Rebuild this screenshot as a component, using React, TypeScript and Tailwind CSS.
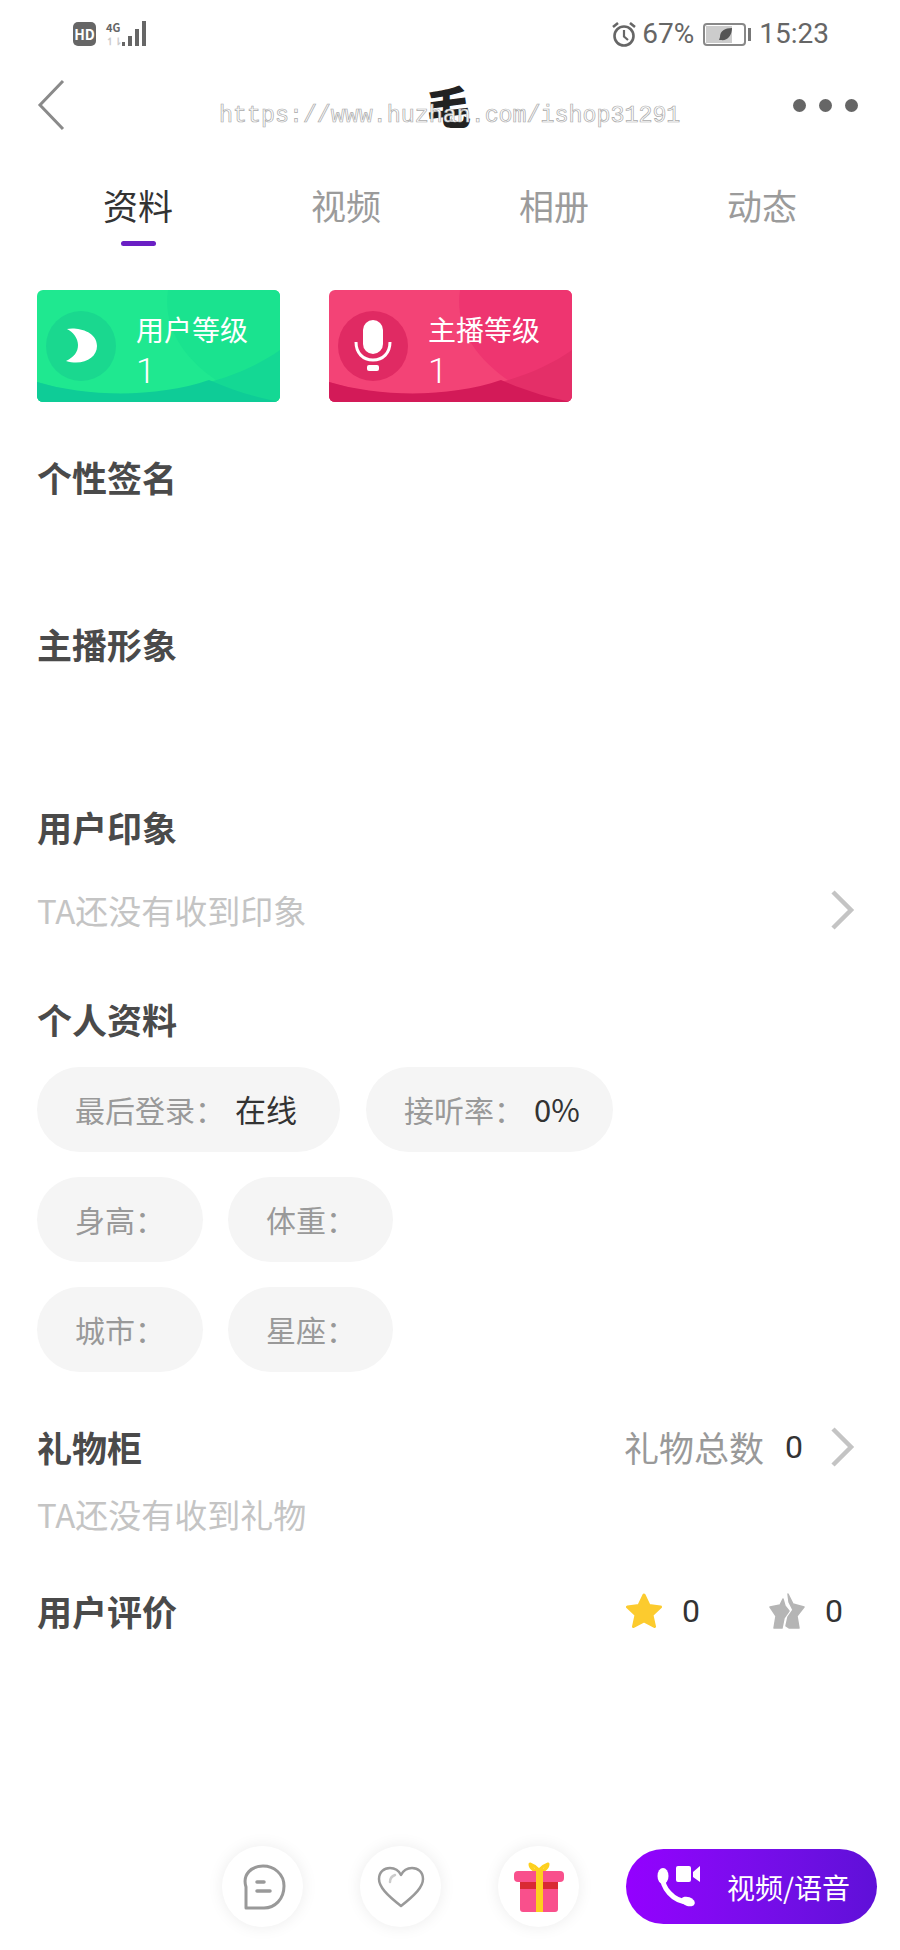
import React from "react";

const tabs = ["资料", "视频", "相册", "动态"];

function Heading({ children, className = "" }: { children: React.ReactNode; className?: string }) {
  return <h2 className={`text-[35px] leading-[48px] font-bold text-[#4a4a4a] -mt-px ${className}`}>{children}</h2>;
}

function Chevron() {
  return (
    <svg width="26" height="42" viewBox="0 0 26 42" fill="none" className="shrink-0">
      <path d="M4 3l18 18L4 39" stroke="#c4c4c4" strokeWidth="4.5" />
    </svg>
  );
}

function Pill({ label, value, className = "" }: { label: string; value?: string; className?: string }) {
  return (
    <div className={`h-[85px] rounded-full bg-[#f5f5f5] flex items-center pl-[38px] text-[30px] text-[#999] ${className}`}>
      {label}
      {value && <span className="text-[#333] text-[31px] ml-[10px]">{value}</span>}
    </div>
  );
}

function StatusBar() {
  return (
    <div className="h-[66px] flex items-center pl-[73px] pr-[71px] pt-[2px] text-[#666]">
      <div className="w-[23px] h-[24px] rounded-[5px] bg-[#666] text-white text-[14px] leading-[24px] text-center font-bold">HD</div>
      <div className="ml-[10px] w-[14px] h-[26px] flex flex-col">
        <span className="text-[11px] leading-[13px] font-bold">4G</span>
        <span className="text-[10px] leading-[13px] text-[#ccc] font-bold">↿⇂</span>
      </div>
      <svg width="26" height="26" viewBox="0 0 26 26" className="ml-px" fill="#666">
        <rect x="1" y="21" width="3" height="4" />
        <rect x="7" y="15" width="4" height="10" />
        <rect x="14" y="8" width="4" height="17" />
        <rect x="21" y="0" width="4" height="25" />
      </svg>
      <svg width="26" height="26" viewBox="0 0 26 26" fill="none" stroke="#666" className="ml-auto">
        <circle cx="13" cy="15" r="9.5" strokeWidth="2.6" />
        <path d="M13 9v6.5l4 3.5" strokeWidth="2.2" />
        <path d="M2 6l5-4M24 6l-5-4" strokeWidth="2.6" />
      </svg>
      <span className="ml-[5px] text-[28px] leading-none font-[Roboto,sans-serif]">67%</span>
      <div className="ml-[9px] w-[43px] h-[23px] rounded-[4px] border-2 border-[#888] p-px relative">
        <div className="w-[26px] h-full bg-[#ccc]" />
        <svg width="14" height="13" viewBox="0 0 14 13" className="absolute left-[14px] top-[3px]" fill="#555">
          <path d="M13 0C6 0 1 3 1 9l-1 3 2 0c6 1 11-4 11-12z" />
        </svg>
      </div>
      <div className="ml-[2px] w-[3px] h-[13px] bg-[#777]" />
      <span className="ml-[8px] text-[28px] leading-none font-[Roboto,sans-serif]">15:23</span>
    </div>
  );
}

function LevelCard({ kind, label }: { kind: "user" | "host"; label: string }) {
  const green = kind === "user";
  return (
    <div className={`relative w-[243px] h-[112px] rounded-[6px] overflow-hidden flex items-center pl-[9px] text-white ${green ? "bg-[#1fe890]" : "bg-[#f34376]"}`}>
      <svg viewBox="0 0 243 112" className="absolute inset-0 w-full h-full">
        <path d="M131 0C125 40 150 75 195 100L243 112V0z" fill={green ? "#1ae38f" : "#ee3570"} />
        <path d="M0 92C70 115 180 105 243 60V112H0z" fill={green ? "#14d894" : "#e42f68"} />
        <path d="M0 92C50 107 120 108 172 90C195 100 220 108 243 112H0z" fill={green ? "#0ecc97" : "#d31a58"} />
      </svg>
      <div className={`relative w-[70px] h-[70px] rounded-full flex items-center justify-center ${green ? "bg-[#1ad88f]" : "bg-[#e02a63]"}`}>
        {green ? (
          <svg width="32" height="36" viewBox="0 0 32 36" fill="#fff">
            <path d="M2 1C10-1 32 2 32 18 32 30 18 38 1 33 9 29 13 24 13 17 13 10 8 4 2 1z" />
          </svg>
        ) : (
          <svg width="38" height="52" viewBox="0 0 38 52" fill="none">
            <rect x="9" y="0" width="20" height="34" rx="10" fill="#fff" />
            <path d="M2 22c0 11 7 18 17 18s17-7 17-18" stroke="#fff" strokeWidth="3" />
            <rect x="13" y="45" width="12" height="6" rx="2" fill="#fff" />
          </svg>
        )}
      </div>
      <div className="relative ml-[20px] mt-[9px]">
        <div className="text-[28px] leading-[40px]">{label}</div>
        <div className="text-[35px] leading-[40px] font-[Roboto,sans-serif] font-light mt-[3px]">1</div>
      </div>
    </div>
  );
}

function RoundBtn({ children }: { children: React.ReactNode }) {
  return (
    <div className="w-[81px] h-[81px] rounded-full bg-white shadow-[0_0_16px_rgba(0,0,0,0.08)] flex items-center justify-center">
      {children}
    </div>
  );
}

export default function App() {
  return (
    <div className="relative w-[900px] h-[1950px] bg-white flex flex-col overflow-hidden font-['Noto_Sans_CJK_SC','Noto_Sans',sans-serif]">
      <StatusBar />

      {/* 导航 */}
      <div className="h-[78px] flex items-center justify-between pl-[37px] pr-[42px]">
        <svg width="28" height="52" viewBox="0 0 28 52" fill="none">
          <path d="M26 2L3 26l23 24" stroke="#8a8a8a" strokeWidth="3" />
        </svg>
        <span className="text-[44px] leading-none font-black text-[#222] ml-[40px] font-['Noto_Sans_CJK_SC']">毛</span>
        <div className="flex gap-[13px]">
          <div className="w-[13px] h-[13px] rounded-full bg-[#666]" />
          <div className="w-[13px] h-[13px] rounded-full bg-[#666]" />
          <div className="w-[13px] h-[13px] rounded-full bg-[#666]" />
        </div>
      </div>
      <div className="absolute left-[219px] top-[100px] text-[23.3px] leading-[32px] font-['Liberation_Mono',monospace] text-white [-webkit-text-stroke:0.7px_#aaaaaa] whitespace-nowrap">
        https://www.huzhan.com/ishop31291
      </div>

      {/* 标签 */}
      <div className="grid grid-cols-4 px-[34px] mt-[37px]">
        {tabs.map((t, i) => (
          <div key={t} className="flex flex-col items-center">
            <span className={`text-[35px] leading-[48px] ${i === 0 ? "text-[#333]" : "text-[#9b9b9b]"}`}>{t}</span>
            <div className={`mt-[12px] w-[35px] h-[5px] rounded-full ${i === 0 ? "bg-[#6a1fc4]" : ""}`} />
          </div>
        ))}
      </div>

      <div className="pl-[37px] pr-[45px]">
        <div className="flex gap-[49px] mt-[44px]">
          <LevelCard kind="user" label="用户等级" />
          <LevelCard kind="host" label="主播等级" />
        </div>

        <Heading className="mt-[51px]">个性签名</Heading>
        <Heading className="mt-[119px]">主播形象</Heading>
        <Heading className="mt-[135px]">用户印象</Heading>

        <div className="mt-[35px] h-[48px] flex items-center justify-between">
          <span className="text-[33px] leading-[48px] text-[#c4c4c4]">TA还没有收到印象</span>
          <Chevron />
        </div>

        <Heading className="mt-[61px]">个人资料</Heading>

        <div className="mt-[24px] flex flex-col gap-[25px]">
          <div className="flex gap-[26px]">
            <Pill label="最后登录：" value="在线" className="w-[303px]" />
            <Pill label="接听率：" value="0%" className="w-[247px]" />
          </div>
          <div className="flex gap-[25px]">
            <Pill label="身高：" className="w-[166px]" />
            <Pill label="体重：" className="w-[165px]" />
          </div>
          <div className="flex gap-[25px]">
            <Pill label="城市：" className="w-[166px]" />
            <Pill label="星座：" className="w-[165px]" />
          </div>
        </div>

        <div className="mt-[51px] h-[48px] flex items-center">
          <Heading>礼物柜</Heading>
          <span className="ml-auto text-[35px] leading-[48px] text-[#999]">礼物总数</span>
          <span className="ml-[21px] text-[32px] leading-[48px] text-[#333] font-[Roboto,sans-serif]">0</span>
          <span className="ml-[26px]"><Chevron /></span>
        </div>

        <div className="mt-[19px] text-[33px] leading-[48px] text-[#c4c4c4]">TA还没有收到礼物</div>

        <div className="mt-[49px] h-[48px] flex items-center pr-[12px]">
          <Heading>用户评价</Heading>
          <svg width="36" height="36" viewBox="0 0 36 36" className="ml-auto">
            <path d="M18 2l5 10.500 11.500 1.500-8.500 8 2.500 11.500L18 28l-10.500 5.500L10 22l-8.500-8L13 12.500z" fill="#fccb2e" stroke="#fccb2e" strokeWidth="3" strokeLinejoin="round" />
          </svg>
          <span className="ml-[20px] w-[18px] text-[32px] leading-[48px] text-[#333] font-[Roboto,sans-serif]">0</span>
          <svg width="36" height="36" viewBox="0 0 36 36" className="ml-[69px]" fill="#b5b5b5" stroke="#b5b5b5" strokeWidth="1.500" strokeLinejoin="round">
            <path d="M14 6L11 12 1 14l6 9-2 12h8l2-10 5-7-4-5z" />
            <path d="M19 1l5 10 11 3-7 9 2 12H20l-3-2 2-9 5-7-4-8z" />
          </svg>
          <span className="ml-[20px] w-[18px] text-[32px] leading-[48px] text-[#333] font-[Roboto,sans-serif]">0</span>
        </div>
      </div>

      {/* 底部操作栏 */}
      <div className="mt-auto mb-[23px] flex items-center pl-[222px] pr-[23px]">
        <RoundBtn>
          <svg width="46" height="46" viewBox="0 0 46 46" fill="none" stroke="#999" strokeWidth="3">
            <path d="M6 44V23C2 10 12 2 23 2c11 0 21 8 21 20 0 13-9 22-20 22z" strokeLinejoin="round" />
            <path d="M17 18h7M17 27h13" strokeLinecap="round" strokeWidth="3.500" />
          </svg>
        </RoundBtn>
        <div className="ml-[57px]">
          <RoundBtn>
            <svg width="48" height="42" viewBox="0 0 48 42" fill="none" stroke="#999" strokeWidth="2.500">
              <path d="M24 40C10 29 2 21 2 13 2 6 7 2 13 2c5 0 9 3 11 7 2-4 6-7 11-7 6 0 11 4 11 11 0 8-8 16-22 27z" strokeLinejoin="round" />
              <path d="M13 16c0-3 2-6 5-7" stroke="#ccc" strokeLinecap="round" />
            </svg>
          </RoundBtn>
        </div>
        <div className="ml-[57px]">
          <RoundBtn>
            <svg width="50" height="50" viewBox="0 0 50 50" fill="none">
              <path d="M25 9C21 9 16 7 16 2c3 1 6 3 9 6 3-3 6-5 9-6 0 5-5 7-9 7z" stroke="#fdd01e" strokeWidth="3" strokeLinejoin="round" />
              <rect x="0" y="9" width="50" height="11" rx="4" fill="#f9508c" />
              <path d="M6 20h38v27a3 3 0 01-3 3H9a3 3 0 01-3-3z" fill="#f9508c" />
              <rect x="6" y="20" width="38" height="7" fill="#d92a33" />
              <rect x="22" y="8" width="7" height="42" fill="#fdd01e" />
            </svg>
          </RoundBtn>
        </div>
        <div className="ml-[47px] w-[251px] h-[75px] rounded-full bg-gradient-to-r from-[#9400ff] to-[#5f10d8] flex items-center pl-[30px] text-white">
          <svg width="45" height="42" viewBox="0 0 45 42" fill="none">
            <path d="M7 9C5 21 17 36 33 36" stroke="#fff" strokeWidth="5" />
            <ellipse cx="7" cy="10" rx="5.500" ry="8" fill="#fff" />
            <ellipse cx="32" cy="35.500" rx="7" ry="4.500" fill="#fff" transform="rotate(20 32 35.500)" />
            <rect x="20" y="0" width="15" height="16" rx="2" fill="#fff" />
            <path d="M37 6l7-6v16l-7-5z" fill="#fff" />
          </svg>
          <span className="ml-[26px] text-[28px] leading-none whitespace-nowrap">视频/语音</span>
        </div>
      </div>
    </div>
  );
}
